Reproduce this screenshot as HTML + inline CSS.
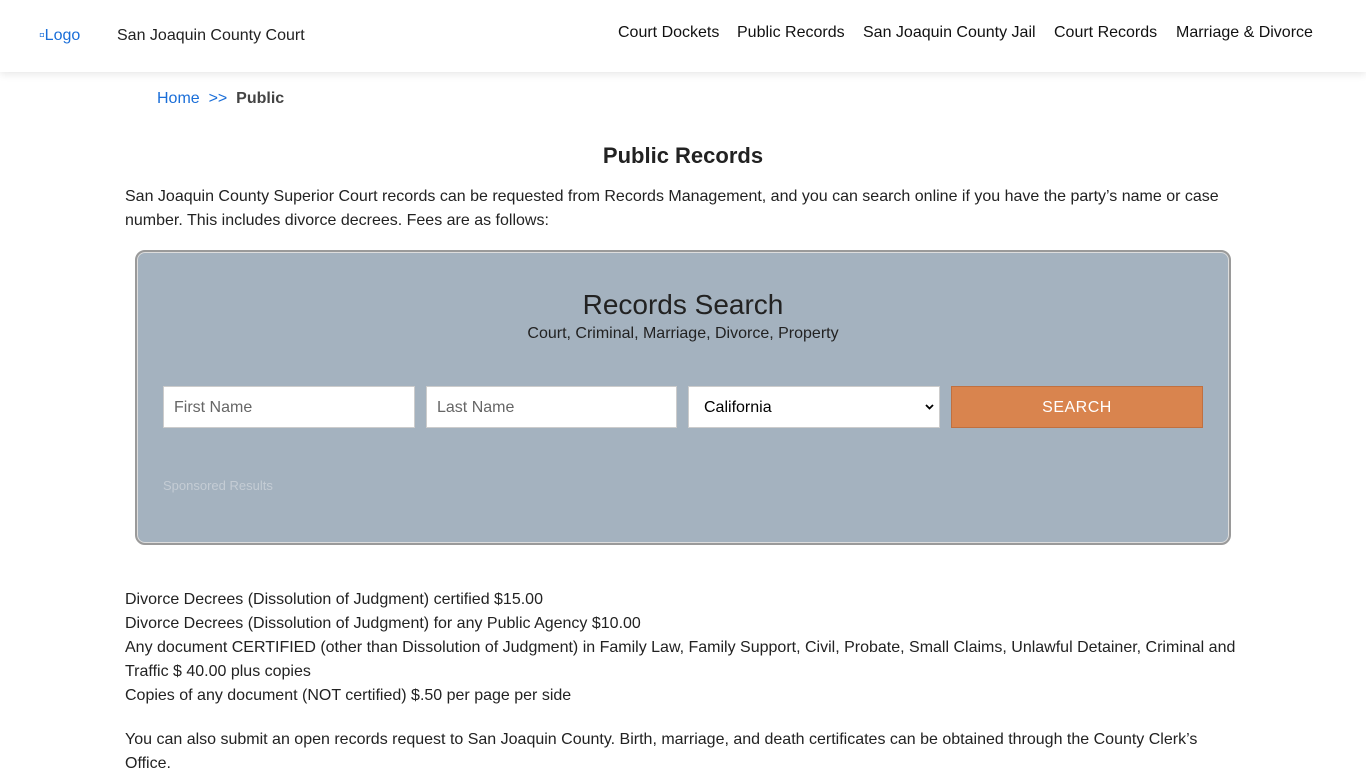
<!DOCTYPE html>
<html><head><meta charset="utf-8"><style>
body{margin:0;font-family:"Liberation Sans",Arial,sans-serif;background:#fff;color:#222;}
.hdr{height:72px;background:#fff;box-shadow:0 2px 8px rgba(0,0,0,.1);position:relative;}
.logo{position:absolute;left:39px;top:27px;font-size:16px;color:#1a6ed8;}
.site{position:absolute;left:117px;top:27px;font-size:16px;color:#222;}
.nav{position:absolute;top:24px;font-size:16px;color:#111;}
.bc{position:absolute;left:157px;top:90px;font-size:16px;}
.bc a{color:#1a6ed8;}
h1{position:absolute;left:0;width:1366px;text-align:center;top:143px;margin:0;font-size:22px;font-weight:bold;color:#222;}
p{position:absolute;left:125px;width:1115px;margin:0;font-size:16px;line-height:24px;color:#222;}
.box{position:absolute;left:135px;top:250px;width:1092px;height:291px;background:#a4b2bf;border:2px solid #9a9a9a;border-radius:10px;box-shadow:inset 0 0 0 1px #ddd;}
.in{position:absolute;top:386px;height:42px;background:#fff;border:1px solid #ccc;box-sizing:border-box;font-size:16px;color:#666;padding:12px 10px;}
</style></head><body>
<div class="hdr">
<span class="logo">▫Logo</span><span class="site">San Joaquin County Court</span>
<span class="nav" style="left:618px">Court Dockets</span>
<span class="nav" style="left:737px">Public Records</span>
<span class="nav" style="left:863px">San Joaquin County Jail</span>
<span class="nav" style="left:1054px">Court Records</span>
<span class="nav" style="left:1176px">Marriage &amp; Divorce</span>
</div>
<div class="bc"><a>Home</a> &nbsp;<a>&gt;&gt;</a>&nbsp; <b style="color:#444">Public</b></div>
<h1>Public Records</h1>
<p style="top:185px">San Joaquin County Superior Court records can be requested from Records Management, and you can search online if you have the party’s name or case number. This includes divorce decrees. Fees are as follows:</p>
<div class="box"></div>
<div style="position:absolute;top:289px;width:1366px;text-align:center;font-size:28px;color:#222">Records Search</div>
<div style="position:absolute;top:325px;width:1366px;text-align:center;font-size:16px;color:#222">Court, Criminal, Marriage, Divorce, Property</div>
<div class="in" style="left:163px;width:252px">First Name</div>
<div class="in" style="left:426px;width:251px">Last Name</div>
<div class="in" style="left:688px;width:252px;color:#000;padding-left:15px">California<svg style="position:absolute;right:5px;top:17px" width="9" height="6" viewBox="0 0 9 6"><path d="M1 1L4.5 4.5L8 1" fill="none" stroke="#000" stroke-width="1.8"/></svg></div>
<div class="in" style="left:951px;width:252px;background:#d9844e;border-color:#c07040;color:#fff;text-align:center;letter-spacing:.5px">SEARCH</div>
<div style="position:absolute;left:163px;top:478px;font-size:13px;color:#c4ccd4">Sponsored Results</div>
<p style="top:588px">Divorce Decrees (Dissolution of Judgment) certified $15.00<br>Divorce Decrees (Dissolution of Judgment) for any Public Agency $10.00<br>Any document CERTIFIED (other than Dissolution of Judgment) in Family Law, Family Support, Civil, Probate, Small Claims, Unlawful Detainer, Criminal and Traffic $ 40.00 plus copies<br>Copies of any document (NOT certified) $.50 per page per side</p>
<p style="top:728px">You can also submit an open records request to San Joaquin County. Birth, marriage, and death certificates can be obtained through the County Clerk’s Office.</p>
</body></html>
